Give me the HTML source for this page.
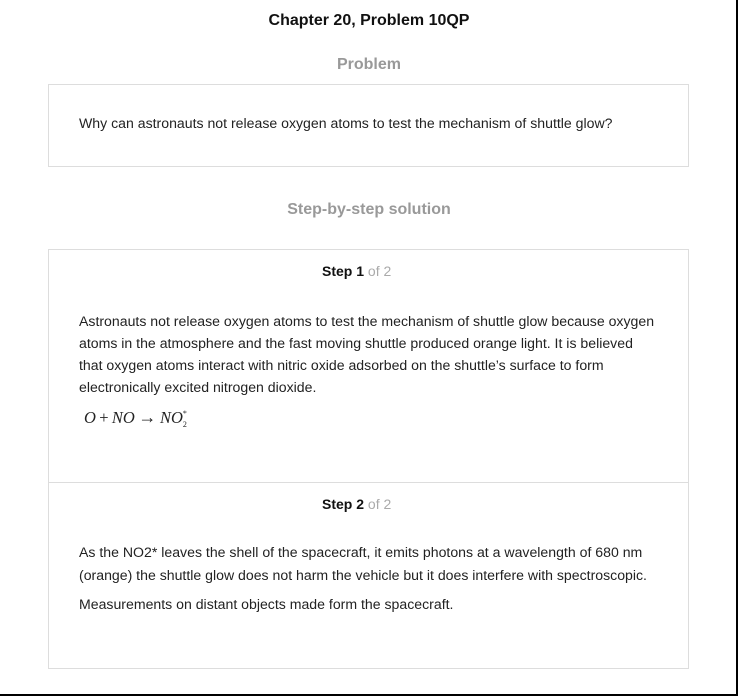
<!DOCTYPE html>
<html><head><meta charset="utf-8"><style>
html,body{margin:0;padding:0;background:#fff}
body{width:738px;height:696px;position:relative;overflow:hidden;font-family:"Liberation Sans",Arial,sans-serif;color:#222}
.frame{position:absolute;left:0;top:0;width:736px;height:694px;border-right:2px solid #000;border-bottom:2px solid #000}
.a{position:absolute;white-space:nowrap}
.box{position:absolute;left:48px;width:639px;border:1px solid #ddd;background:#fff}
.t{font-size:14.1px;line-height:22px;color:#222}
.h{font-weight:bold;color:#999;font-size:16px;width:738px;text-align:center;left:0}
.step{font-size:14px;left:273px}
.step b{color:#111}.step span{color:#aaa}
</style></head><body>
<div class="frame"></div>
<div class="a" style="left:0;width:738px;text-align:center;top:12px;font-size:16px;font-weight:bold;color:#111">Chapter 20, Problem 10QP</div>
<div class="a h" style="top:56px">Problem</div>
<div class="box" style="top:84px;height:81px">
<div class="a t" style="left:30px;top:27px">Why can astronauts not release oxygen atoms to test the mechanism of shuttle glow?</div>
</div>
<div class="a h" style="top:201px">Step-by-step solution</div>
<div class="box" style="top:249px;height:418px">
<div class="a step" style="top:13px"><b>Step 1</b> <span>of 2</span></div>
<div class="a t" style="left:30px;top:60px">Astronauts not release oxygen atoms to test the mechanism of shuttle glow because oxygen<br>atoms in the atmosphere and the fast moving shuttle produced orange light. It is believed<br>that oxygen atoms interact with nitric oxide adsorbed on the shuttle’s surface to form<br>electronically excited nitrogen dioxide.</div>
<div class="a" style="left:35px;top:157px;font-family:'Liberation Serif',serif;font-style:italic;font-size:16.5px">O<span style="font-style:normal">&thinsp;+&thinsp;</span>NO<span style="font-style:normal;font-size:18px">&thinsp;→&thinsp;</span>NO<span style="position:relative;font-size:8px;font-style:normal"><span style="position:absolute;top:-7px">*</span><span style="position:relative;top:4px">2</span></span></div>
<div style="position:absolute;left:0;top:232px;width:639px;border-top:1px solid #ddd"></div>
<div class="a step" style="top:246px"><b>Step 2</b> <span>of 2</span></div>
<div class="a t" style="left:30px;top:291px">As the NO2* leaves the shell of the spacecraft, it emits photons at a wavelength of 680 nm</div>
<div class="a t" style="left:30px;top:314px">(orange) the shuttle glow does not harm the vehicle but it does interfere with spectroscopic.</div>
<div class="a t" style="left:30px;top:343px">Measurements on distant objects made form the spacecraft.</div>
</div>
</body></html>
